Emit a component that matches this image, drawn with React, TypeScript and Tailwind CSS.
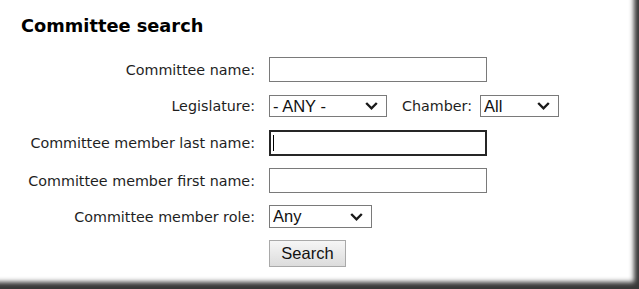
import React from "react";

const Chevron = () => (
  <svg width="13" height="9" viewBox="0 0 13 9" className="pointer-events-none absolute right-[9px] top-1/2 -translate-y-1/2">
    <path d="M1.2 1.5 L6.5 6.8 L11.8 1.5" fill="none" stroke="#1a1a1a" strokeWidth="2.4" />
  </svg>
);

const Select = ({ value, w, h }: { value: string; w: string; h: string }) => (
  <div className={`relative ${w} ${h}`}>
    <select
      defaultValue={value}
      className="h-full w-full appearance-none border border-[#7a7a7a] bg-white pl-[3px] text-[16.5px] leading-none text-[#111] outline-none"
      style={{ fontFamily: '"Liberation Sans", Arial, sans-serif' }}
    >
      <option>{value}</option>
    </select>
    <Chevron />
  </div>
);

const Label = ({ children }: { children: React.ReactNode }) => (
  <div className="w-[234px] shrink-0 whitespace-nowrap pt-[2px] text-right text-[14.3px] text-[#1e1e1e]">{children}</div>
);

export default function App() {
  return (
    <div
      className="relative h-[289px] w-[639px] overflow-hidden bg-white shadow-[inset_-7px_-9px_5px_-2px_rgba(45,45,45,0.95)]"
      style={{ fontFamily: '"DejaVu Sans", Verdana, sans-serif' }}
    >
      <div className="pl-[21px] pt-[15px]">
        <h1 className="text-[17.8px] font-bold leading-[22px] text-black">Committee search</h1>

        <div className="mt-[20px] flex h-[25px] items-center gap-[14px]">
          <Label>Committee name:</Label>
          <input className="h-[25px] w-[218px] border border-[#7a7a7a] bg-white outline-none" />
        </div>

        <div className="mt-[13px] flex h-[22px] items-center gap-[14px]">
          <Label>Legislature:</Label>
          <Select value="- ANY -" w="w-[118px]" h="h-[22px]" />
          <span className="ml-[1px] whitespace-nowrap pt-[2px] text-[14.3px] text-[#1e1e1e]">Chamber:</span>
          <div className="-ml-[6px]">
            <Select value="All" w="w-[79px]" h="h-[22px]" />
          </div>
        </div>

        <div className="mt-[13px] flex h-[26px] items-center gap-[14px]">
          <Label>Committee member last name:</Label>
          <div className="relative h-[26px] w-[218px] border-2 border-[#262626] bg-white">
            <div className="absolute left-[2px] top-[3px] h-[16px] w-[1px] bg-black" />
          </div>
        </div>

        <div className="mt-[12px] flex h-[25px] items-center gap-[14px]">
          <Label>Committee member first name:</Label>
          <input className="h-[25px] w-[218px] border border-[#7a7a7a] bg-white outline-none" />
        </div>

        <div className="mt-[12px] flex h-[23px] items-center gap-[14px]">
          <Label>Committee member role:</Label>
          <Select value="Any" w="w-[103px]" h="h-[23px]" />
        </div>

        <div className="mt-[12px] flex h-[27px] items-center gap-[14px]">
          <div className="w-[234px] shrink-0" />
          <button
            className="h-[27px] w-[77px] border border-[#a9a9a9] bg-gradient-to-b from-[#f6f6f6] to-[#dcdcdc] text-[16.5px] text-[#111]"
            style={{ fontFamily: '"Liberation Sans", Arial, sans-serif' }}
          >
            Search
          </button>
        </div>
      </div>
    </div>
  );
}
